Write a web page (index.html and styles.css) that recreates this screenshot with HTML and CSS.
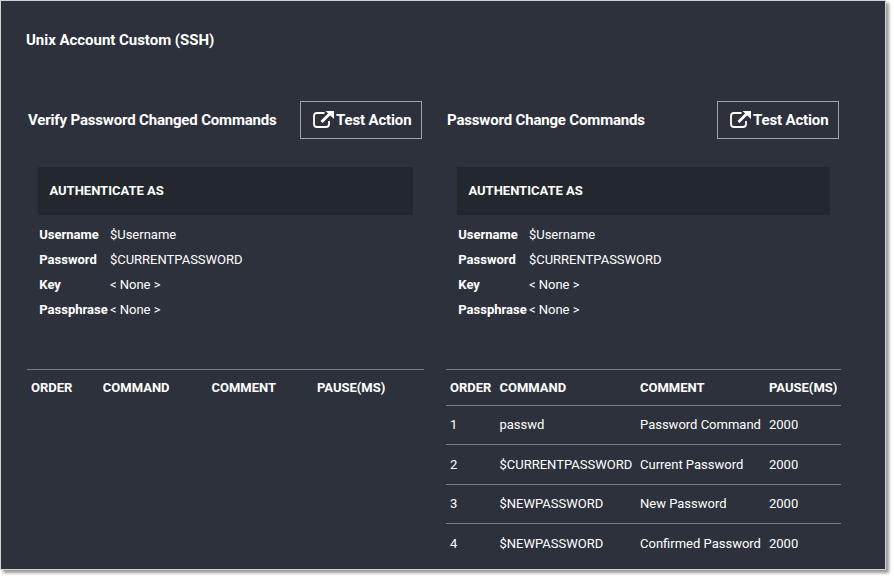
FILE: index.html
```
<!DOCTYPE html>
<html lang="en">
<head>
<meta charset="utf-8">
<title>Unix Account Custom (SSH)</title>
<link rel="stylesheet" href="styles.css">
</head>
<body>
<main class="panel">
  <h1>Unix Account Custom (SSH)</h1>
  <div class="columns">
    <section class="verify">
      <header><h2>Verify Password Changed Commands</h2>
        <button><svg viewBox="0 0 21 19"><path d="M11.500 3H4Q1 3 1 6v8q0 3 3 3h9q3 0 3-3v-3"/><path class="arrow" d="M8.500 12 17.500 3"/><path class="tip" d="M12.500 1H21v8z"/></svg>Test Action</button></header>
      <div class="auth">AUTHENTICATE AS</div>
      <dl><dt>Username</dt><dd>$Username</dd><dt>Password</dt><dd>$CURRENTPASSWORD</dd><dt>Key</dt><dd>&lt; None &gt;</dd><dt>Passphrase</dt><dd>&lt; None &gt;</dd></dl>
      <div class="table"><div class="row head"><span>ORDER</span><span>COMMAND</span><span>COMMENT</span><span>PAUSE(MS)</span></div></div>
    </section>
    <section class="change">
      <header><h2>Password Change Commands</h2>
        <button><svg viewBox="0 0 21 19"><path d="M11.500 3H4Q1 3 1 6v8q0 3 3 3h9q3 0 3-3v-3"/><path class="arrow" d="M8.500 12 17.500 3"/><path class="tip" d="M12.500 1H21v8z"/></svg>Test Action</button></header>
      <div class="auth">AUTHENTICATE AS</div>
      <dl><dt>Username</dt><dd>$Username</dd><dt>Password</dt><dd>$CURRENTPASSWORD</dd><dt>Key</dt><dd>&lt; None &gt;</dd><dt>Passphrase</dt><dd>&lt; None &gt;</dd></dl>
      <div class="table"><div class="row head"><span>ORDER</span><span>COMMAND</span><span>COMMENT</span><span>PAUSE(MS)</span></div>
        <div class="row"><span>1</span><span>passwd</span><span>Password Command</span><span>2000</span></div>
        <div class="row tall"><span>2</span><span>$CURRENTPASSWORD</span><span>Current Password</span><span>2000</span></div>
        <div class="row"><span>3</span><span>$NEWPASSWORD</span><span>New Password</span><span>2000</span></div>
        <div class="row tall"><span>4</span><span>$NEWPASSWORD</span><span>Confirmed Password</span><span>2000</span></div>
      </div>
    </section>
  </div>
</main>
</body>
</html>
```
FILE: styles.css
```
* { box-sizing: border-box; }
body { margin: 0; min-height: 578px; background: #fff; color: #fff; font: 13px/25px Roboto, sans-serif; overflow: hidden; }
.panel { width: 886px; height: 570px; border: 1px solid #d2d4d2; background: #2d313b; box-shadow: 3px 3px 3px #999; padding: 26px 0 0 25px; overflow: hidden; }
h1, h2 { margin: 0; font-size: 15px; font-weight: 700; line-height: 26px; white-space: nowrap; }
h1 { height: 74px; letter-spacing: -.03px; }
h2 { letter-spacing: -.17px; }
.columns { display: grid; grid-template-columns: 398px 396px; column-gap: 21px; }
header { display: flex; justify-content: space-between; align-items: center; height: 38px; padding: 0 2px; }
button { display: flex; align-items: center; gap: 2px; width: 122px; height: 38px; padding: 0 0 0 12px; border: 1px solid #9da3ae; background: transparent; color: #fff; font: 700 15px Roboto, sans-serif; letter-spacing: -.15px; white-space: nowrap; }
svg { width: 21px; height: 19px; margin-top: -2px; fill: none; stroke: #fff; stroke-width: 1.8; }
.arrow { stroke-width: 2.8; }
.tip { fill: #fff; stroke: none; }
.auth { height: 48px; margin: 28px 11px 0 12px; padding: 0 11.4px; background: #23282e; font-weight: 700; line-height: 47px; }
dl { display: grid; grid-template-columns: 70.6px 1fr; margin: 7px 0 0 13.3px; height: 147px; align-content: start; }
dt { font-weight: 700; white-space: nowrap; }
dd { margin: 0; }
.table { margin-left: 1px; }
.row { display: grid; grid-template-columns: 49.5px 140.5px 129px 68px; height: 39px; padding: 0 4px; border-top: 1px solid #777d89; line-height: 38px; white-space: nowrap; }
.tall { height: 40px; line-height: 39px; }
.head { height: 36px; line-height: 36px; font-weight: 700; }
.verify .row { grid-template-columns: 71.8px 108.7px 105.5px 1fr; }
```
